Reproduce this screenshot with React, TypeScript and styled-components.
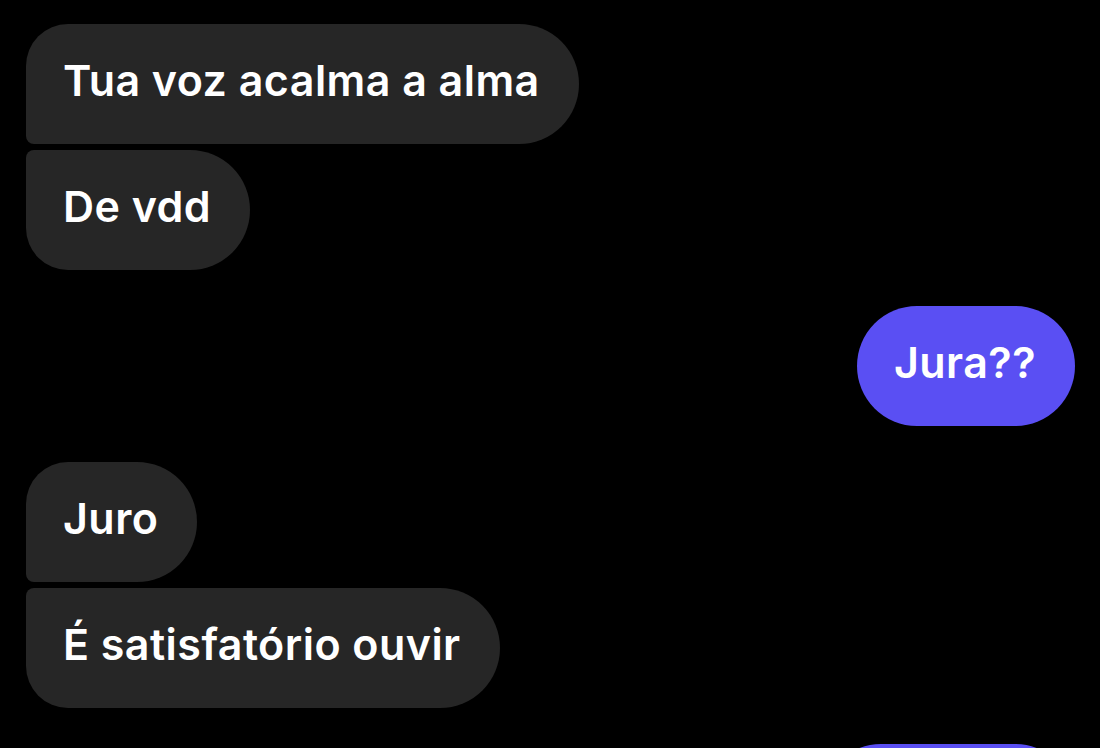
import React from "react";
import styled, { createGlobalStyle, css } from "styled-components";

const Global = createGlobalStyle`
  html, body {
    margin: 0;
    padding: 0;
    background: #000;
  }
  body {
    font-family: Inter, "Noto Sans", "Liberation Sans", sans-serif;
    -webkit-font-smoothing: antialiased;
  }
`;

const Screen = styled.div`
  width: 1100px;
  height: 748px;
  overflow: hidden;
  background: #000;
  box-sizing: border-box;
  padding: 24px 25px 0 26px;
  display: flex;
  flex-direction: column;
  gap: 36px;
`;

const Group = styled.div<{ $mine?: boolean }>`
  display: flex;
  flex-direction: column;
  gap: 6px;
  align-items: ${(p) => (p.$mine ? "flex-end" : "flex-start")};
`;

type Pos = "single" | "first" | "last";

const Bubble = styled.div<{ $mine?: boolean; $pos: Pos; $w?: number }>`
  flex: none;
  height: 120px;
  box-sizing: border-box;
  display: flex;
  align-items: center;
  padding: 0 39px 9px 37px;
  font-size: 43px;
  font-weight: 600;
  letter-spacing: 0.45px;
  color: #fff;
  white-space: nowrap;
  background: ${(p) => (p.$mine ? "#5a4ff3" : "#262626")};
  border-radius: 60px;
  ${(p) =>
    p.$w &&
    css`
      width: ${p.$w}px;
    `}
  ${(p) =>
    p.$pos === "first" &&
    css`
      border-radius: 42px 60px 60px 8px;
    `}
  ${(p) =>
    p.$pos === "last" &&
    css`
      border-radius: 8px 60px 60px 42px;
    `}
`;

export default function App() {
  return (
    <>
      <Global />
      <Screen>
        <Group>
          <Bubble $pos="first">Tua voz acalma a alma</Bubble>
          <Bubble $pos="last">De vdd</Bubble>
        </Group>
        <Group $mine>
          <Bubble $mine $pos="single">Jura??</Bubble>
        </Group>
        <Group>
          <Bubble $pos="first">Juro</Bubble>
          <Bubble $pos="last">É satisfatório ouvir</Bubble>
        </Group>
        <Group $mine>
          <Bubble $mine $pos="single" $w={254} aria-hidden="true" />
        </Group>
      </Screen>
    </>
  );
}
